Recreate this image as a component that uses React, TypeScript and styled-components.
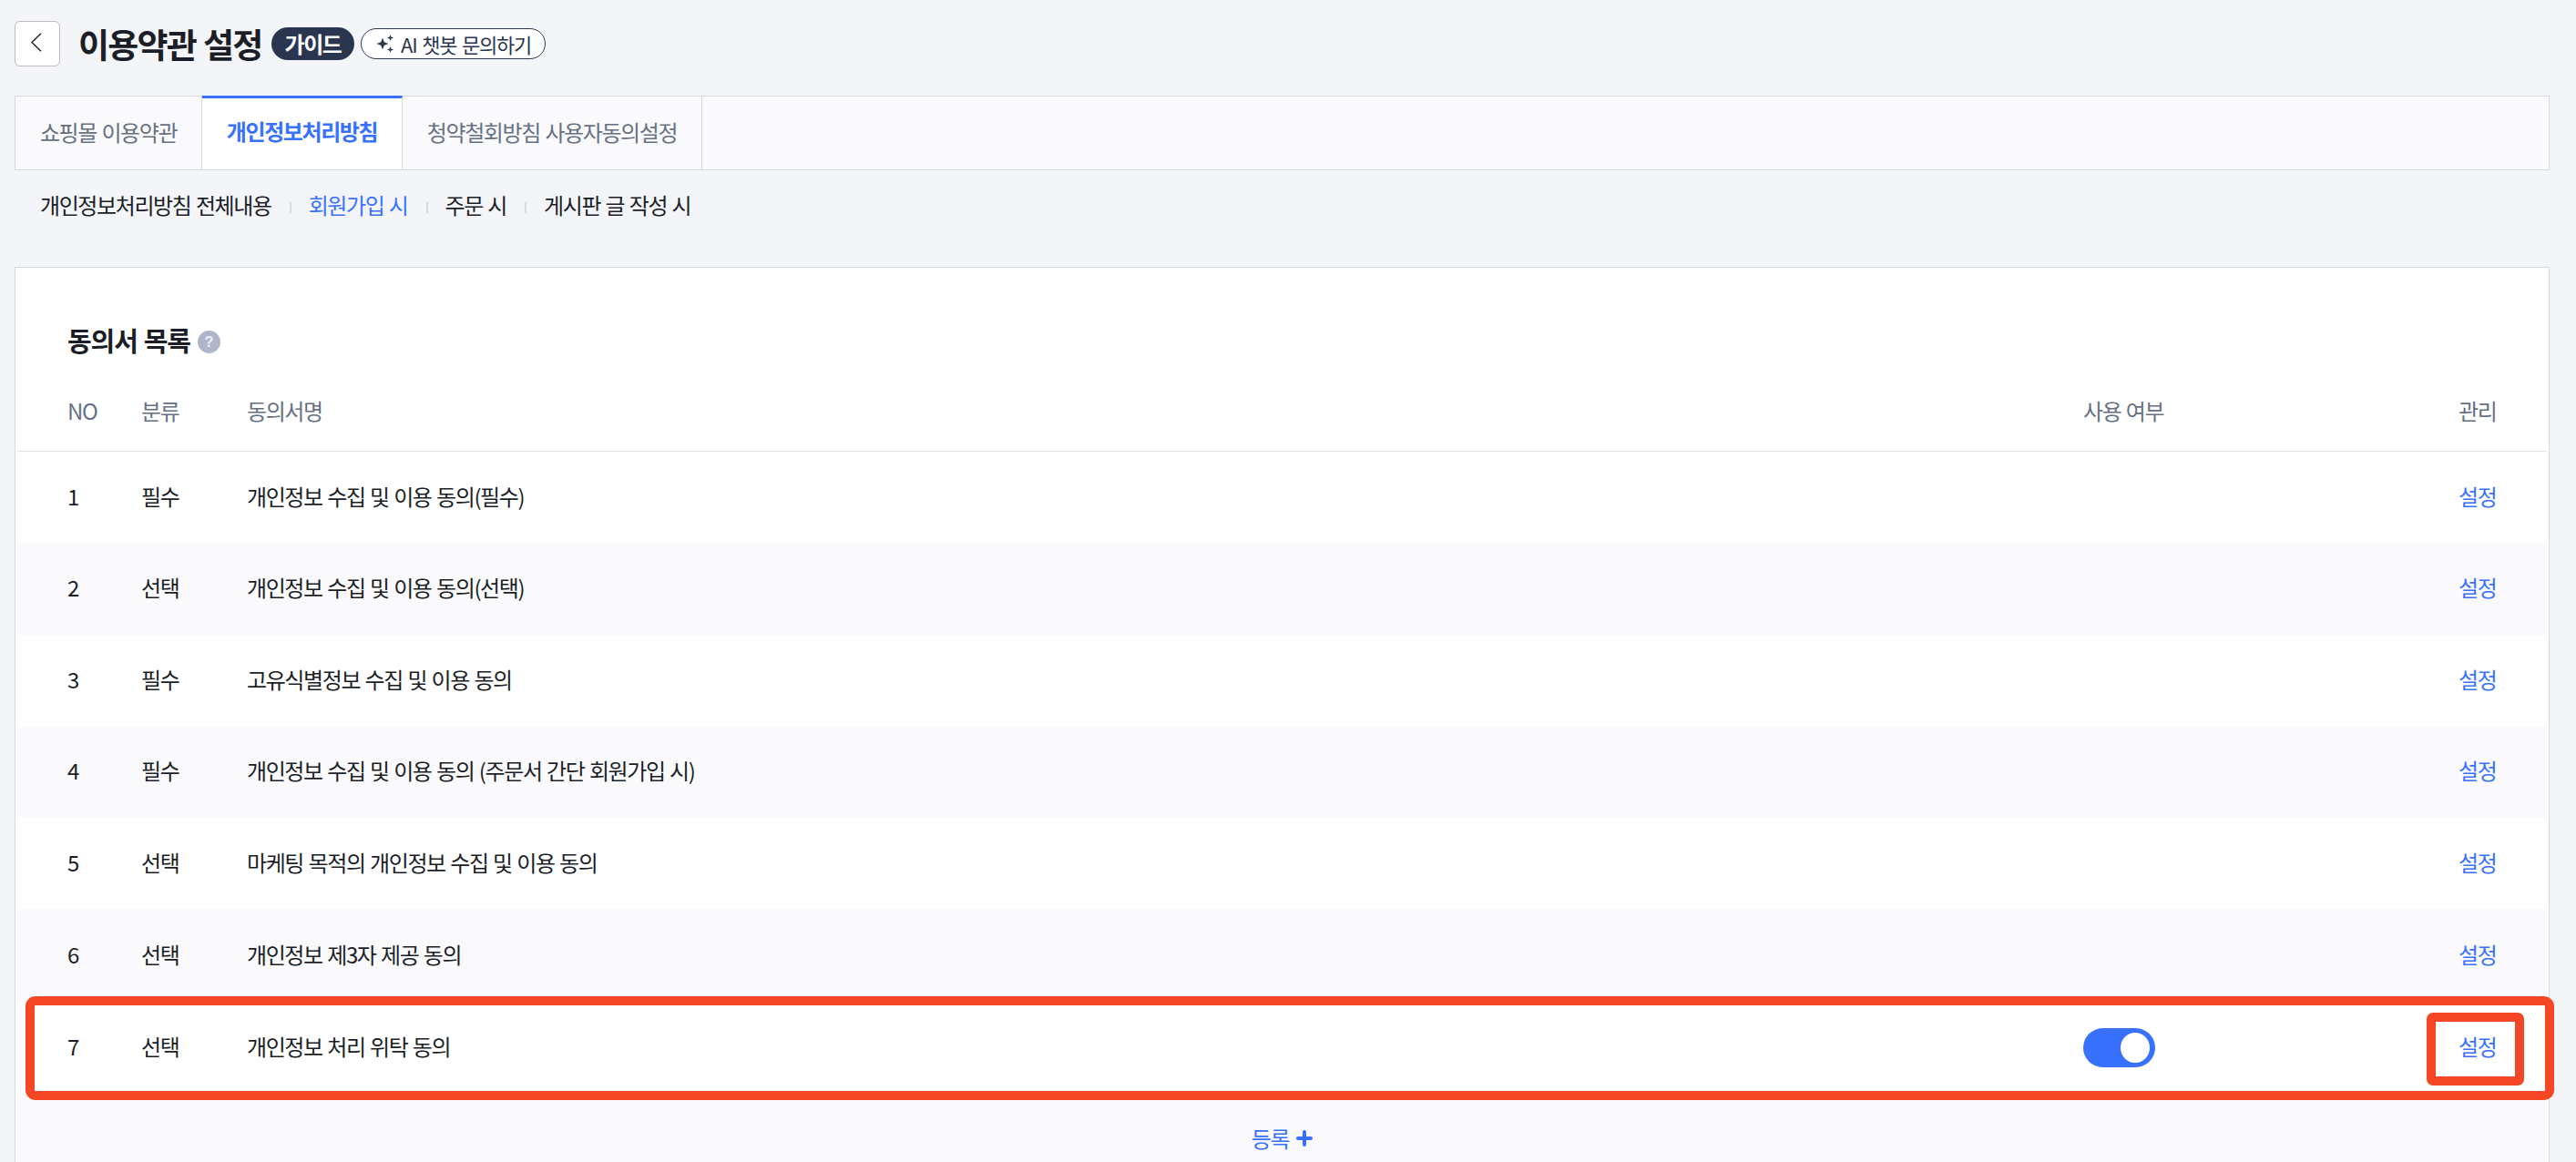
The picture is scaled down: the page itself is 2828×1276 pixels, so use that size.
import { useState } from "react";
import styled, { createGlobalStyle } from "styled-components";

const GlobalStyle = createGlobalStyle`
  * {
    box-sizing: border-box;
  }

  body {
    margin: 0;
    background: #f4f5f9;
    color: #1b1e26;
    font-family: "Noto Sans CJK KR", "Noto Sans", sans-serif;
    font-size: 24px;
    line-height: 36px;
    letter-spacing: -1.4px;
    word-spacing: 1.5px;
  }

  button {
    padding: 0;
    border: 0;
    background: none;
    color: inherit;
    font: inherit;
    letter-spacing: inherit;
    word-spacing: inherit;
    cursor: pointer;
  }
`;

const Page = styled.main`
  height: 1276px;
  padding: 23px 29px 0 16px;
  overflow: hidden;
`;

const Header = styled.header`
  display: flex;
  align-items: center;
  height: 50px;
`;

const BackButton = styled.button`
  display: flex;
  align-items: center;
  justify-content: center;
  width: 50px;
  height: 50px;
  padding-right: 3px;
  padding-bottom: 3px;
  background: #fff;
  border: 1px solid #bbb;
  border-radius: 6px;
`;

const PageTitle = styled.h1`
  width: 212px;
  margin: 0 0 0 20px;
  font-size: 37px;
  line-height: 50px;
  font-weight: 700;
  letter-spacing: -1.8px;
  white-space: nowrap;
`;

const GuideBadge = styled.button`
  width: 91px;
  height: 36px;
  background: #2a3550;
  border-radius: 18px;
  color: #fff;
  font-weight: 700;
  line-height: 36px;
`;

const ChatbotButton = styled.button`
  display: flex;
  align-items: center;
  gap: 8px;
  width: 203px;
  height: 34px;
  margin-left: 7px;
  padding: 0 0 1px 16px;
  background: #fff;
  border: 1px solid #2a3550;
  border-radius: 17px;
  color: #2a3550;
  font-size: 22px;
  line-height: 30px;
  letter-spacing: -1.2px;
  word-spacing: 2px;
  white-space: nowrap;
`;

const TabBar = styled.nav`
  display: flex;
  height: 82px;
  margin-top: 32px;
  background: #fafafc;
  border: 1px solid #d5d9e0;
`;

const Tab = styled.button<{ $active?: boolean; $width: number }>`
  width: ${({ $width }) => $width}px;
  margin-top: ${({ $active }) => ($active ? "-1px" : "0")};
  padding-bottom: ${({ $active }) => ($active ? "7px" : "3px")};
  border-top: ${({ $active }) => ($active ? "3px solid #3971ff" : "0")};
  border-right: 1px solid #d5d9e0;
  background: ${({ $active }) => ($active ? "#fff" : "transparent")};
  color: ${({ $active }) => ($active ? "#3971ff" : "#667084")};
  font-weight: ${({ $active }) => ($active ? 700 : 400)};
  white-space: nowrap;
`;

const SubNav = styled.nav`
  display: flex;
  align-items: center;
  height: 36px;
  margin: 20px 0 0 28px;
`;

const SubNavItem = styled.button<{ $active?: boolean }>`
  display: flex;
  align-items: center;
  color: ${({ $active }) => ($active ? "#3971ff" : "inherit")};

  &:not(:first-child)::before {
    content: "";
    width: 2px;
    height: 12px;
    margin: 6px 19px 0 20px;
    background: #d5dbe2;
  }
`;

const Card = styled.section`
  height: 1040px;
  margin-top: 50px;
  padding: 57px 2px 0;
  background: #fff;
  border: 1px solid #d0dae2;
`;

const CardTitle = styled.h2`
  display: flex;
  align-items: center;
  gap: 8px;
  height: 45px;
  margin: 0;
  padding: 0 0 2px 55px;
  font-size: 29px;
  font-weight: 700;
  letter-spacing: -1.1px;
`;

const HelpIcon = styled.span`
  display: flex;
  align-items: center;
  justify-content: center;
  width: 25px;
  height: 25px;
  margin-top: 5px;
  background: #b1b5c9;
  border-radius: 50%;
  color: #f1f2f7;
  font-family: "Liberation Sans", sans-serif;
  font-size: 16px;
  font-weight: 700;
  line-height: 25px;
  letter-spacing: 0;
`;

const Row = styled.div<{ $striped?: boolean }>`
  position: relative;
  display: grid;
  grid-template-columns: 81px 116px 1fr 412px 97px;
  align-items: center;
  height: 100.8px;
  padding-left: 55px;
  background: ${({ $striped }) => ($striped ? "#fafafc" : "#fff")};
`;

const HeadRow = styled(Row)`
  height: 100px;
  padding-top: 10px;
  border-bottom: 1px solid #e1e3e6;
  color: #667084;
`;

const TableBody = styled.div`
  ${Row}:first-child {
    height: 100px;
  }
`;

const Cell = styled.span`
  padding-bottom: 3px;
`;

const LinkButton = styled.button`
  padding-bottom: 3px;
  color: #3971ff;
  text-align: left;
`;

const Switch = styled.button<{ $on: boolean }>`
  display: flex;
  align-items: center;
  justify-content: ${({ $on }) => ($on ? "flex-end" : "flex-start")};
  width: 79px;
  height: 43px;
  padding: 0 6px;
  background: ${({ $on }) => ($on ? "#3971ff" : "#b1b5c9")};
  border-radius: 22px;
`;

const Knob = styled.span`
  width: 32px;
  height: 33px;
  background: #fff;
  border-radius: 50%;
`;

const RowHighlight = styled.div`
  position: absolute;
  top: -6px;
  right: -8px;
  bottom: -7px;
  left: 9px;
  border: 10px solid #f54725;
  border-radius: 11px;
  pointer-events: none;
  z-index: 1;
`;

const LinkHighlight = styled.div`
  position: absolute;
  top: 12px;
  right: 25px;
  width: 107px;
  height: 80px;
  border: 10px solid #f54725;
  border-radius: 7px;
  pointer-events: none;
`;

const AddRow = styled.div`
  display: flex;
  align-items: center;
  justify-content: center;
  height: 100.8px;
  background: #fafafc;
`;

const AddButton = styled(LinkButton)`
  display: flex;
  align-items: center;
  gap: 8px;
  padding-bottom: 2px;
`;

type Agreement = {
  no: number;
  type: string;
  name: string;
  toggle?: boolean;
};

const agreements: Agreement[] = [
  { no: 1, type: "필수", name: "개인정보 수집 및 이용 동의(필수)" },
  { no: 2, type: "선택", name: "개인정보 수집 및 이용 동의(선택)" },
  { no: 3, type: "필수", name: "고유식별정보 수집 및 이용 동의" },
  {
    no: 4,
    type: "필수",
    name: "개인정보 수집 및 이용 동의 (주문서 간단 회원가입 시)",
  },
  { no: 5, type: "선택", name: "마케팅 목적의 개인정보 수집 및 이용 동의" },
  { no: 6, type: "선택", name: "개인정보 제3자 제공 동의" },
  { no: 7, type: "선택", name: "개인정보 처리 위탁 동의", toggle: true },
];

const SparkleIcon = () => (
  <svg width="19" height="20" viewBox="0 0 19 20" fill="currentColor">
    <path d="M7 3.5 8.8 8.2 13.5 10 8.8 11.8 7 16.5 5.2 11.8.5 10 5.2 8.2Z" />
    <path d="M15.5 0 16.4 2.6 19 3.5 16.4 4.4 15.5 7 14.6 4.4 12 3.5 14.6 2.6Z" />
    <path d="M15.5 13 16.4 15.6 19 16.5 16.4 17.4 15.5 20 14.6 17.4 12 16.5 14.6 15.6Z" />
  </svg>
);

const App = () => {
  const [enabled, setEnabled] = useState(true);

  return (
    <>
      <GlobalStyle />
      <Page>
        <Header>
          <BackButton aria-label="뒤로">
            <svg width="12" height="21" viewBox="0 0 12 21" fill="none">
              <path d="M11 .7 1 10.5 11 20.3" stroke="#222" strokeWidth="1.4" />
            </svg>
          </BackButton>
          <PageTitle>이용약관 설정</PageTitle>
          <GuideBadge>가이드</GuideBadge>
          <ChatbotButton>
            <SparkleIcon />
            AI 챗봇 문의하기
          </ChatbotButton>
        </Header>

        <TabBar>
          <Tab $width={205}>쇼핑몰 이용약관</Tab>
          <Tab $width={220} $active>
            개인정보처리방침
          </Tab>
          <Tab $width={329}>청약철회방침 사용자동의설정</Tab>
        </TabBar>

        <SubNav>
          <SubNavItem>개인정보처리방침 전체내용</SubNavItem>
          <SubNavItem $active>회원가입 시</SubNavItem>
          <SubNavItem>주문 시</SubNavItem>
          <SubNavItem>게시판 글 작성 시</SubNavItem>
        </SubNav>

        <Card>
          <CardTitle>
            동의서 목록
            <HelpIcon>?</HelpIcon>
          </CardTitle>
          <HeadRow>
            <span>NO</span>
            <span>분류</span>
            <span>동의서명</span>
            <span>사용 여부</span>
            <span>관리</span>
          </HeadRow>
          <TableBody>
            {agreements.map(({ no, type, name, toggle }) => (
              <Row key={no} $striped={no % 2 === 0}>
                <Cell>{no}</Cell>
                <Cell>{type}</Cell>
                <Cell>{name}</Cell>
                <span>
                  {toggle && (
                    <Switch
                      $on={enabled}
                      role="switch"
                      aria-checked={enabled}
                      onClick={() => setEnabled(!enabled)}
                    >
                      <Knob />
                    </Switch>
                  )}
                </span>
                <LinkButton>설정</LinkButton>
                {toggle && (
                  <>
                    <RowHighlight />
                    <LinkHighlight />
                  </>
                )}
              </Row>
            ))}
          </TableBody>
          <AddRow>
            <AddButton>
              등록
              <svg width="18" height="18" viewBox="0 0 18 18" fill="none">
                <path
                  d="M9 2v14M2 9h14"
                  stroke="currentColor"
                  strokeWidth="4"
                  strokeLinecap="round"
                />
              </svg>
            </AddButton>
          </AddRow>
        </Card>
      </Page>
    </>
  );
};

export default App;
